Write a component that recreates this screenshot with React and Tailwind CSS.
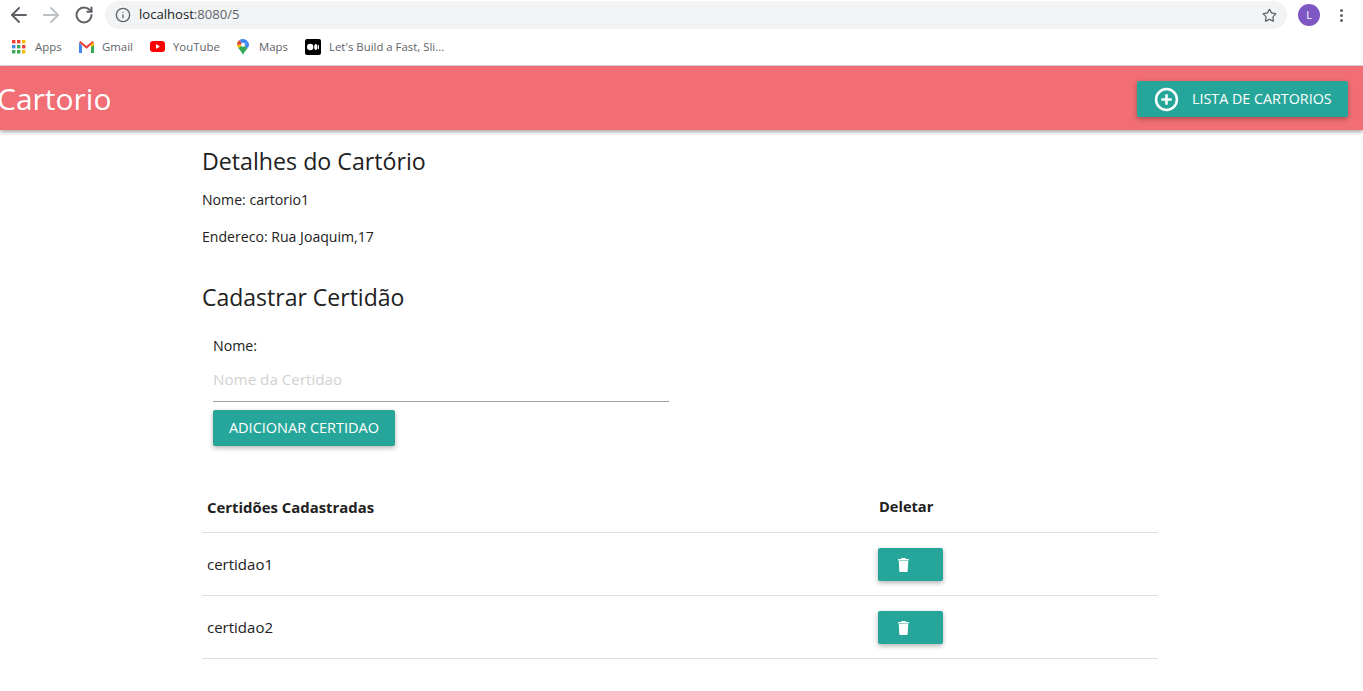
import React from 'react';
import { ArrowLeft, ArrowRight, RotateCw, Info, Star, PlusCircle } from 'lucide-react';

const FONT = "font-['Open_Sans','Noto_Sans',sans-serif]";

const AppsIcon = () => (
  <svg width="14" height="14" viewBox="0 0 14 14" className="mr-[9px]">
    {[
      [0, 0, '#ea4335'], [5, 0, '#ea4335'], [10, 0, '#fbbc04'],
      [0, 5, '#4285f4'], [5, 5, '#34a853'], [10, 5, '#ea4335'],
      [0, 10, '#34a853'], [5, 10, '#34a853'], [10, 10, '#fbbc04'],
    ].map(([x, y, c]) => (
      <rect key={`${x}-${y}`} x={x} y={y} width="3.4" height="3.4" fill={c} />
    ))}
  </svg>
);

const GmailIcon = () => (
  <svg width="15" height="12" viewBox="0 0 15 12" className="mr-2">
    <path d="M0 1.5 V12 H3 V4.5 Z" fill="#4285f4" />
    <path d="M15 1.5 V12 H12 V4.5 Z" fill="#34a853" />
    <path d="M0 1.5 L1.5 0 L7.5 5 L13.5 0 L15 1.5 L7.5 7.8 Z" fill="#ea4335" />
    <path d="M12 3 L15 1.5 L15 4 L12 6.3 Z" fill="#fbbc04" />
  </svg>
);

const YoutubeIcon = () => (
  <svg width="15" height="11" viewBox="0 0 15 11" className="mr-2">
    <rect width="15" height="11" rx="3" fill="#ff0000" />
    <path d="M6 3 L10 5.5 L6 8 Z" fill="#fff" />
  </svg>
);

const MapsIcon = () => (
  <svg width="12" height="16" viewBox="0 0 12 16" className="mr-[10px]">
    <path d="M1.2 9 C2.8 11 5 13 6 16 C7 13 9.2 11 10.8 9 L6 5.8 Z" fill="#34a853" />
    <path d="M0 5.8 C0 7 .5 8 1.2 9 L6 5.8 Z" fill="#fbbc04" />
    <path d="M0 5.8 C0 3.8 1 2.1 2.4 1 L6 5.8 Z" fill="#ea4335" />
    <path d="M2.4 1 C3.4 .4 4.6 0 6 0 C8 0 9.8 .9 10.8 2.4 L6 5.8 Z" fill="#4285f4" />
    <path d="M10.8 2.4 C11.6 3.4 12 4.5 12 5.8 C12 7 11.5 8 10.8 9 L6 5.8 Z" fill="#4285f4" />
    <circle cx="6" cy="5.8" r="2.1" fill="#fff" />
  </svg>
);

const MediumIcon = () => (
  <svg width="16" height="16" viewBox="0 0 16 16" className="mr-2">
    <rect width="16" height="16" rx="2" fill="#000" />
    <circle cx="5.2" cy="8" r="3.2" fill="#fff" />
    <ellipse cx="10.8" cy="8" rx="1.6" ry="3" fill="#fff" />
    <ellipse cx="13.4" cy="8" rx=".6" ry="2.6" fill="#fff" />
  </svg>
);

const TrashIcon = () => (
  <svg width="11" height="14" viewBox="0 0 11 14" fill="#fff">
    <path d="M3.5 0 H7.5 L8 1 H10.5 Q11 1 11 1.5 V2.5 H0 V1.5 Q0 1 .5 1 H3 Z" />
    <path d="M.8 3 H10.2 L9.7 13 Q9.6 14 8.7 14 H2.3 Q1.4 14 1.3 13 Z" />
  </svg>
);

const bookmarks = [
  { icon: <AppsIcon />, label: 'Apps', width: 'w-[67px]' },
  { icon: <GmailIcon />, label: 'Gmail', width: 'w-[71px]' },
  { icon: <YoutubeIcon />, label: 'YouTube', width: 'w-[87px]' },
  { icon: <MapsIcon />, label: 'Maps', width: 'w-[68px]' },
  { icon: <MediumIcon />, label: "Let's Build a Fast, Sli...", width: 'w-[150px]' },
];

const BrowserBar = () => (
  <div className="h-[66px] bg-white border-b border-[#dadce0] font-['Open_Sans',sans-serif]">
    <div className="h-[30px] flex items-center">
      <div className="w-[105px] flex items-center pl-[7px] gap-[8px]">
        <ArrowLeft size={24} strokeWidth={2} className="text-[#5f6368]" />
        <ArrowRight size={24} strokeWidth={2} className="text-[#bdc1c6]" />
        <RotateCw size={20} strokeWidth={2.4} className="ml-[3px] text-[#5f6368]" />
      </div>
      <div className="w-[1182px] h-[28px] rounded-full bg-[#f1f3f4] flex items-center pl-[10px] pr-[10px]">
        <Info size={16} className="text-[#5f6368] mr-[8px]" />
        <span className="text-[13.1px] text-[#202124]">localhost<span className="text-[#5f6368]">:8080/5</span></span>
        <Star size={15} strokeWidth={2} className="ml-auto text-[#5f6368]" />
      </div>
      <div className="ml-[11px] w-[22px] h-[22px] rounded-full bg-[#7e57c2] text-white text-[11px] flex items-center justify-center">L</div>
      <div className="ml-[20px] flex flex-col gap-[2px]">
        <span className="w-[3px] h-[3px] rounded-full bg-[#5f6368]" />
        <span className="w-[3px] h-[3px] rounded-full bg-[#5f6368]" />
        <span className="w-[3px] h-[3px] rounded-full bg-[#5f6368]" />
      </div>
    </div>
    <div className="h-[34px] flex items-center pl-[12px] text-[11.4px] text-[#5f6368]">
      {bookmarks.map((b) => (
        <div key={b.label} className={`flex items-center ${b.width}`}>
          {b.icon}
          <span>{b.label}</span>
        </div>
      ))}
    </div>
  </div>
);

const TealButton = ({ children, className }) => (
  <button className={`bg-[#26a69a] text-white rounded-[2px] shadow-[0_2px_5px_rgba(0,0,0,0.3)] flex items-center ${className}`}>
    {children}
  </button>
);

const certidoes = ['certidao1', 'certidao2'];

export default function App() {
  return (
    <div className={`min-h-screen bg-white text-[#212121] overflow-hidden ${FONT}`}>
      <BrowserBar />

      <nav className="h-[64px] bg-[#f06e74] shadow-[0_2px_4px_rgba(0,0,0,0.35)] flex items-center justify-between pt-[2px] pr-[15px]">
        <span className="text-[30px] font-normal text-white -ml-[3px] mb-[2px]">Cartorio</span>
        <TealButton className="w-[211px] h-[36px] pl-[17px]">
          <PlusCircle size={25} strokeWidth={2.4} className="mr-[13px]" />
          <span className="text-[14.3px]">LISTA DE CARTORIOS</span>
        </TealButton>
      </nav>

      <main className="pl-[202px] w-[1158px] pt-[16px]">
        <h4 className="text-[23.2px] leading-[31px]">Detalhes do Cartório</h4>
        <p className="text-[14.1px] leading-[20px] mt-[13px]">Nome: cartorio1</p>
        <p className="text-[14.1px] leading-[20px] mt-[17px]">Endereco: Rua Joaquim,17</p>
        <h4 className="text-[23px] leading-[31px] mt-[35px]">Cadastrar Certidão</h4>

        <form className="pl-[11px] mt-[23px]">
          <label className="block text-[14.2px] leading-[20px]">Nome:</label>
          <input
            placeholder="Nome da Certidao"
            className="block w-[456px] h-[46px] border-b border-[#9e9e9e] text-[15.2px] outline-none placeholder:text-[#d1d1d1]"
          />
          <TealButton className="w-[182px] h-[36px] mt-[8px] justify-center">
            <span className="text-[14.5px]">ADICIONAR CERTIDAO</span>
          </TealButton>
        </form>

        <table className="w-full mt-[36px] text-[15px] text-left">
          <thead>
            <tr className="h-[50px] border-b border-[#e0e0e0]">
              <th className="pl-[5px] w-[676px] font-bold text-[14.9px]">Certidões Cadastradas</th>
              <th className="pl-px pt-px font-bold text-[14.6px]">Deletar</th>
            </tr>
          </thead>
          <tbody>
            {certidoes.map((c) => (
              <tr key={c} className="h-[63px] border-b border-[#e0e0e0]">
                <td className="pl-[5px] pt-[2px]">{c}</td>
                <td className="pt-[2px]">
                  <TealButton className="w-[65px] h-[33px] pl-[20px]">
                    <TrashIcon />
                  </TealButton>
                </td>
              </tr>
            ))}
          </tbody>
        </table>
      </main>
    </div>
  );
}
